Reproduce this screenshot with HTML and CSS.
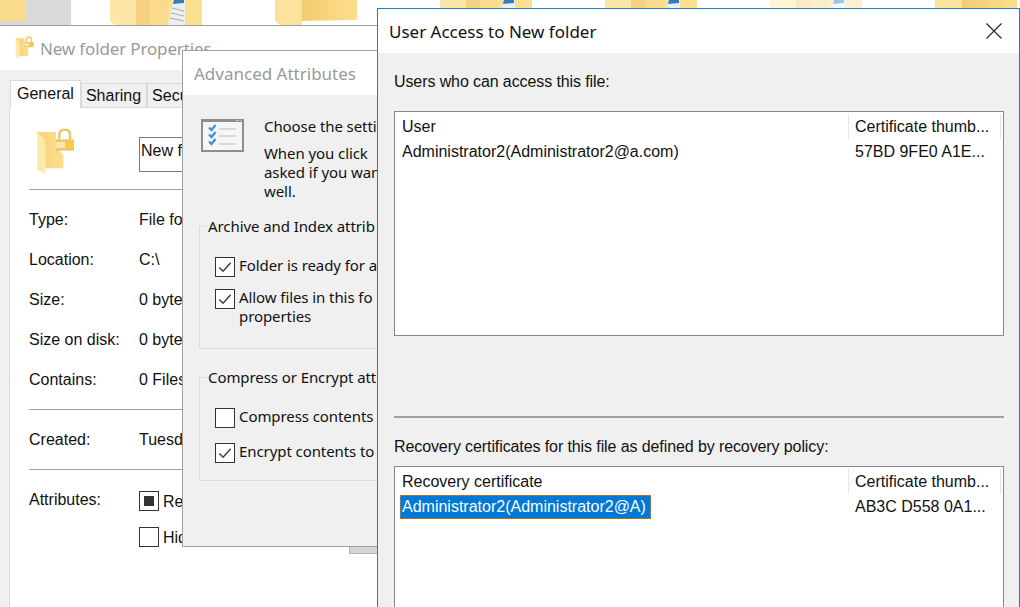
FILE: index.html
```html
<!DOCTYPE html>
<html lang="en">
<head>
<meta charset="utf-8">
<title>User Access to New folder</title>
<link rel="stylesheet" href="styles.css">
</head>
<body>
<svg class="defs" width="0" height="0" aria-hidden="true">
  <defs>
    <linearGradient id="gBack" x1="0" y1="0" x2="1" y2="0"><stop offset="0" stop-color="#f6d27a"/><stop offset="1" stop-color="#fbdf8e"/></linearGradient>
    <linearGradient id="gFront" x1="0" y1="0" x2="1" y2="0"><stop offset="0" stop-color="#f2cc72"/><stop offset="1" stop-color="#fcdf8a"/></linearGradient>
    <symbol id="lockfolder" viewBox="48 24 117 144">
      <path d="M52 36H108V80L130 105V145H78L52 36Z" fill="url(#gBack)"/>
      <path d="M52 37L76 60V162L52 150Z" fill="#fdeaa9"/>
      <path d="M118 58V44Q118 29 134 29Q150 29 150 44V58" fill="none" stroke="#e6c369" stroke-width="7"/>
      <rect x="108" y="58" width="54" height="34" fill="#edc860"/>
      <rect x="108" y="66" width="28" height="18" fill="#f6e6b2"/>
      <rect x="136" y="66" width="26" height="18" fill="#fbca3e"/>
    </symbol>
    <symbol id="docfolder" viewBox="0 0 92 25">
      <path d="M0 0H92V25H5L0 21Z" fill="#fcdf8f"/>
      <path d="M0 0H26V25H5L0 21Z" fill="#fde7a6"/>
      <rect x="26" y="0" width="14" height="25" fill="#f5d280"/>
      <rect x="40" y="0" width="18" height="25" fill="#fadb8c"/>
      <path d="M58 25L62 5L64 0H75V25Z" fill="#eceef0"/>
      <path d="M63 4L64 0H74V3Z" fill="#2f7fbd"/>
      <path d="M62 8L74 11M61 13L74 16M60 18L74 21" stroke="#a9acaf" stroke-width="1" fill="none"/>
    </symbol>
    <symbol id="plainfolder" viewBox="0 0 85 25">
      <path d="M0 0H27V25H5L0 21Z" fill="#fde29c"/>
      <path d="M27 0H82V20L27 21Z" fill="url(#gFront)"/>
    </symbol>
  </defs>
</svg>

<main class="desktop">
  <div class="icon-strip">
    <div class="tile-selected"><span class="tile-folder"></span></div>
    <svg class="doc" aria-hidden="true"><use href="#docfolder"/></svg>
    <svg class="plain" aria-hidden="true"><use href="#plainfolder"/></svg>
    <svg class="doc" aria-hidden="true"><use href="#docfolder"/></svg>
    <svg class="doc" aria-hidden="true"><use href="#docfolder"/></svg>
    <svg class="doc faded" aria-hidden="true"><use href="#docfolder"/></svg>
    <svg class="plain" aria-hidden="true"><use href="#plainfolder"/></svg>
  </div>

  <section class="window props">
    <header class="props-title">
      <svg class="title-icon" aria-hidden="true"><use href="#lockfolder"/></svg>
      <span>New folder Properties</span>
    </header>
    <div class="props-body">
      <div class="tabs">
        <span class="tab tab-active">General</span>
        <span class="tab">Sharing</span>
        <span class="tab">Security</span>
      </div>
      <div class="panel">
        <div class="name-row">
          <svg class="big-icon" aria-hidden="true"><use href="#lockfolder"/></svg>
          <div class="name-input">New folder</div>
        </div>
        <div class="rule"></div>
        <div class="rows">
          <div class="row"><span class="key">Type:</span><span>File folder</span></div>
          <div class="row"><span class="key">Location:</span><span>C:\</span></div>
          <div class="row"><span class="key">Size:</span><span>0 bytes</span></div>
          <div class="row"><span class="key">Size on disk:</span><span>0 bytes</span></div>
          <div class="row"><span class="key">Contains:</span><span>0 Files</span></div>
        </div>
        <div class="rule"></div>
        <div class="rows">
          <div class="row"><span class="key">Created:</span><span>Tuesday</span></div>
        </div>
        <div class="rule"></div>
        <div class="attrs">
          <span class="key">Attributes:</span>
          <div class="attr-list">
            <div class="check-row"><span class="box box-mixed"></span><span>Read-only</span></div>
            <div class="check-row"><span class="box"></span><span>Hidden</span></div>
          </div>
        </div>
      </div>
      <span class="behind-button"></span>
    </div>
  </section>

  <section class="window adv">
    <header class="adv-title">Advanced Attributes</header>
    <div class="adv-body">
      <div class="adv-head">
        <svg class="adv-icon" viewBox="0 0 43 33" aria-hidden="true">
          <rect x="1" y="1.5" width="41" height="30.5" fill="#f6f6f6" stroke="#8e8e8e" stroke-width="2"/>
          <rect x="0" y="0" width="43" height="3" fill="#8e8e8e"/>
          <path d="M35 1.5H37M38.500 1.500H40" stroke="#d8d8d8" stroke-width="1"/>
          <path d="M8 8.500L10.500 11L14.500 6M8 15.500L10.500 18L14.500 13M8 22.500L10.500 25L14.500 20" fill="none" stroke="#3c92dc" stroke-width="2.200"/>
          <path d="M18 10H35M18 17H35M18 25H35" stroke="#cfcfcf" stroke-width="1.500"/>
        </svg>
        <div class="adv-text">
          <p>Choose the setti</p>
          <p>When you click<br>asked if you wan<br>well.</p>
        </div>
      </div>
      <fieldset class="group group-archive">
        <legend>Archive and Index attrib</legend>
        <div class="check-row"><span class="box box-checked"><svg viewBox="0 0 19 19" aria-hidden="true"><path d="M3.500 10L7.500 14L15.500 5"/></svg></span><span class="check-text">Folder is ready for a</span></div>
        <div class="check-row top"><span class="box box-checked"><svg viewBox="0 0 19 19" aria-hidden="true"><path d="M3.500 10L7.500 14L15.500 5"/></svg></span><span class="check-text">Allow files in this fo<br>properties</span></div>
      </fieldset>
      <fieldset class="group group-compress">
        <legend>Compress or Encrypt att</legend>
        <div class="check-row"><span class="box"></span><span class="check-text">Compress contents</span></div>
        <div class="check-row"><span class="box box-checked"><svg viewBox="0 0 19 19" aria-hidden="true"><path d="M3.500 10L7.500 14L15.500 5"/></svg></span><span class="check-text">Encrypt contents to</span></div>
      </fieldset>
    </div>
  </section>

  <section class="window access">
    <header class="access-title">
      <span>User Access to New folder</span>
      <svg class="close" viewBox="0 0 16 16" aria-hidden="true"><path d="M.5 .5L15.500 15.500M15.500 .5L.5 15.500"/></svg>
    </header>
    <div class="access-body">
      <div class="label">Users who can access this file:</div>
      <div class="list list-users">
        <div class="list-row list-head"><span class="col-a">User</span><span class="col-b">Certificate thumb...</span></div>
        <div class="list-row"><span class="col-a">Administrator2(Administrator2@a.com)</span><span class="col-c">57BD 9FE0 A1E...</span></div>
      </div>
      <div class="access-rule"></div>
      <div class="label">Recovery certificates for this file as defined by recovery policy:</div>
      <div class="list list-recovery">
        <div class="list-row list-head"><span class="col-a">Recovery certificate</span><span class="col-b">Certificate thumb...</span></div>
        <div class="list-row"><span class="col-a"><span class="selected">Administrator2(Administrator2@A)</span></span><span class="col-c">AB3C D558 0A1...</span></div>
      </div>
    </div>
  </section>
</main>
</body>
</html>
```
FILE: styles.css
```css
* { box-sizing: border-box; }
html, body { margin: 0; padding: 0; }
body { width: 1020px; height: 607px; overflow: hidden; background: #fff; color: #111; }
.defs { position: absolute; }
p { margin: 0; }

.desktop {
  position: relative;
  width: 1020px;
  height: 607px;
  overflow: hidden;
  background: #fff;
  font-family: "Liberation Sans", Arial, sans-serif;
  font-size: 16px;
  line-height: 19px;
}

/* desktop icons behind the dialogs */
.icon-strip { display: flex; height: 25px; }
.tile-selected { width: 71px; height: 25px; margin-right: 39px; background: #d9d9d9; flex: none; }
.tile-folder { display: block; width: 26px; height: 21px; background: #fbdc8c; }
.doc { width: 92px; height: 25px; margin-right: 73px; flex: none; }
.plain { width: 85px; height: 25px; margin-right: 80px; flex: none; }
.faded { opacity: .45; }

.window { position: absolute; }

/* Properties window */
.props {
  left: 0;
  top: 25px;
  width: 400px;
  height: 582px;
  overflow: hidden;
  border-top: 1px solid #a0a0a0;
  background: #f0f0f0;
}
.props-title {
  display: flex;
  align-items: center;
  gap: 6px;
  height: 44px;
  padding-left: 15px;
  background: #fff;
  color: #9a9a9a;
  font-family: "Noto Sans", "Open Sans", sans-serif;
  font-size: 17px;
  letter-spacing: -.15px;
}
.title-icon { width: 19px; height: 24px; }
.props-body { position: relative; padding: 10px 0 0 9px; }
.tabs { display: flex; align-items: flex-end; height: 27px; padding-left: 1px; }
.tab {
  display: flex;
  align-items: center;
  height: 24px;
  margin-left: 0;
  padding: 0 5px 0 4px;
  border: 1px solid #d9d9d9;
  border-bottom: 0;
  background: #f0f0f0;
  white-space: nowrap;
}
.tab-active {
  position: relative;
  z-index: 1;
  height: 28px;
  margin: 0 0 -1px;
  padding: 0 6px 3px;
  background: #fff;
}
.panel {
  height: 520px;
  padding-left: 19px;
  border: 1px solid #d9d9d9;
  background: #fff;
}
.name-row { display: flex; height: 81px; }
.big-icon { width: 39px; height: 48px; margin: 20px 0 0 7px; flex: none; }
.name-input {
  width: 240px;
  height: 35px;
  margin: 29px 0 0 64px;
  padding: 3px 1px;
  border: 1px solid #7a7a7a;
  flex: none;
  white-space: nowrap;
}
.rule { height: 1px; width: 340px; background: #a0a0a0; }
.rows { padding: 9px 0 10px; }
.row { display: flex; align-items: center; height: 40px; white-space: nowrap; }
.key { width: 110px; flex: none; }
.attrs { display: flex; padding-top: 20px; }
.attr-list { display: flex; flex-direction: column; gap: 16px; padding-top: 1px; }

.check-row { display: flex; gap: 4px; align-items: center; white-space: nowrap; }
.check-row.top { align-items: flex-start; }
.box {
  display: block;
  position: relative;
  width: 20px;
  height: 20px;
  border: 1px solid #333;
  background: #fff;
  flex: none;
}
.box svg { display: block; width: 18px; height: 18px; fill: none; stroke: #444; stroke-width: 1.600; }
.box-mixed::after {
  content: "";
  position: absolute;
  left: 4px;
  top: 4px;
  width: 10px;
  height: 10px;
  background: #333;
}
.behind-button {
  position: absolute;
  left: 349px;
  top: 476px;
  width: 40px;
  height: 8px;
  border: 1px solid #b5b5b5;
  background: #d4d4d4;
}

/* Advanced Attributes window */
.adv {
  left: 182px;
  top: 50px;
  width: 197px;
  height: 497px;
  overflow: hidden;
  border: 1px solid #a0a0a0;
  background: #f0f0f0;
  font-family: "Noto Sans", "Open Sans", sans-serif;
  font-size: 15px;
  letter-spacing: -.08px;
}
.adv-title {
  display: flex;
  align-items: center;
  height: 44px;
  padding-left: 11px;
  background: #fff;
  color: #999;
  font-size: 17px;
  letter-spacing: 0;
}
.adv-body { width: 460px; padding: 0 16px; }
.adv-head { display: flex; padding-top: 22px; }
.adv-icon { width: 43px; height: 33px; margin: 2px 20px 0 2px; flex: none; }
.adv-text { white-space: nowrap; }
.adv-text p + p { margin-top: 8px; }
.check-text { margin-bottom: 2px; }
.top .check-text { margin: -1px 0 0; }
.group {
  margin: 0;
  padding: 0 0 0 15px;
  border: 1px solid #dcdcdc;
  min-width: 0;
}
.group legend { margin-left: -8px; padding: 0 1px; line-height: 20px; white-space: nowrap; }
.group-archive { margin-top: 15px; padding-top: 20px; padding-bottom: 22px; }
.group-compress { margin-top: 18px; padding-top: 20px; padding-bottom: 17px; }
.group-archive .check-row + .check-row { margin-top: 12px; }
.group-compress .check-row + .check-row { margin-top: 14px; }

/* User Access window */
.access {
  left: 377px;
  top: 8px;
  width: 643px;
  height: 599px;
  border: 1px solid #1a7fd0;
  border-bottom: 0;
  background: #f0f0f0;
}
.access-title {
  display: flex;
  align-items: center;
  justify-content: space-between;
  height: 44px;
  padding: 0 17px 0 11px;
  background: #fff;
  font-family: "Noto Sans", "Open Sans", sans-serif;
  font-size: 17px;
}
.close { width: 16px; height: 16px; fill: none; stroke: #222; stroke-width: 1.100; }
.access-body { padding: 19px 15px 0 16px; }
.label { height: 20px; line-height: 20px; letter-spacing: -.1px; white-space: nowrap; }
.list {
  padding-top: 2px;
  border: 1px solid #828790;
  background: #fff;
}
.list-users { height: 225px; margin-top: 19px; }
.list-recovery { height: 200px; margin-top: 9px; }
.list-row { display: flex; height: 25px; line-height: 25px; white-space: nowrap; }
.col-a { width: 453px; padding-left: 7px; flex: none; }
.col-b { width: 153px; padding-left: 6px; border-left: 1px solid #e5e5e5; border-right: 1px solid #e5e5e5; flex: none; }
.col-c { padding-left: 7px; }
.selected {
  display: inline-block;
  height: 24px;
  margin-left: -2px;
  padding: 0 5px 0 2px;
  line-height: 23px;
  background: #0078d7;
  color: #fff;
  outline: 1px dotted #c98a3a;
  outline-offset: -1px;
}
.access-rule { height: 2px; margin: 80px 0 19px; background: #a0a0a0; }
```
